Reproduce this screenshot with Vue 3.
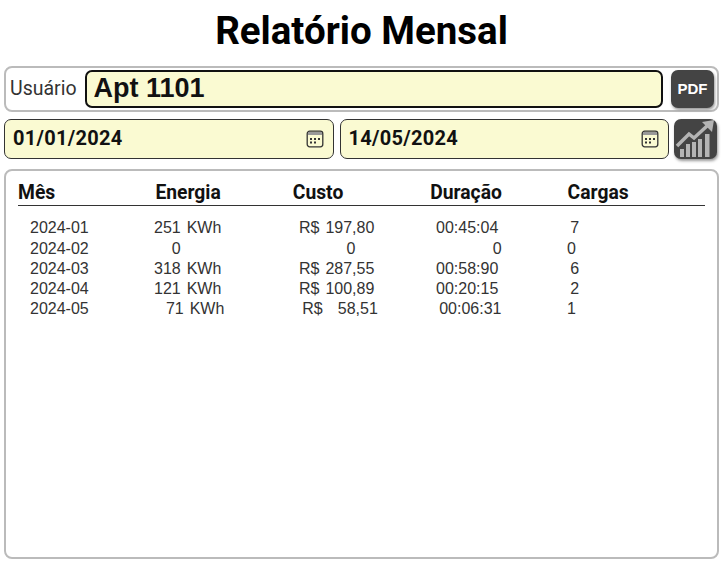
<template>
  <div class="page">
    <h1 class="title">Relatório Mensal</h1>

    <div class="user-box">
      <label class="user-label">Usuário</label>
      <input class="user-input" value="Apt 1101" readonly>
      <button class="btn-pdf">PDF</button>
    </div>

    <div class="date-row">
      <div v-for="d in dates" :key="d" class="date-field">
        <input class="date-input" :value="d" readonly>
        <svg class="cal-icon" viewBox="0 0 18 18" width="18" height="18">
          <rect x="1.2" y="1.2" width="15.6" height="15.6" rx="2.5" fill="none" stroke="#333" stroke-width="1.3" />
          <rect x="2" y="2" width="14" height="3" fill="#999" />
          <rect x="4" y="8" width="2" height="2" fill="#333" />
          <rect x="8" y="8" width="2" height="2" fill="#333" />
          <rect x="12" y="8" width="2" height="2" fill="#333" />
          <rect x="4" y="11.5" width="2" height="2" fill="#333" />
          <rect x="8" y="11.5" width="2" height="2" fill="#333" />
        </svg>
      </div>
      <button class="btn-chart">
        <svg viewBox="0 0 42 40" width="42" height="40">
          <path d="M3 27 L15 15 L20 19 L33 7" fill="none" stroke="#b4b4b4" stroke-width="3.5" />
          <path d="M28 3 L40 1 L38 13 Z" fill="#b4b4b4" />
          <rect x="6" y="30" width="4" height="8" fill="#b4b4b4" />
          <rect x="12" y="25" width="4" height="13" fill="#b4b4b4" />
          <rect x="18" y="23" width="4" height="15" fill="#b4b4b4" />
          <rect x="24" y="20" width="4" height="18" fill="#b4b4b4" />
          <rect x="31" y="15" width="4.5" height="23" fill="#b4b4b4" />
        </svg>
      </button>
    </div>

    <div class="report">
      <div class="report-head">
        <span v-for="h in headers" :key="h">{{ h }}</span>
      </div>
      <div class="report-body">
        <div v-for="r in rows" :key="r[0]" class="report-row">
          <span v-for="(c, i) in r" :key="i">{{ c }}</span>
        </div>
      </div>
    </div>
  </div>
</template>

<script setup>
const dates = ['01/01/2024', '14/05/2024']

const headers = ['Mês', 'Energia', 'Custo', 'Duração', 'Cargas']

const rows = [
  ['2024-01', '251 KWh', 'R$ 197,80', '00:45:04', '\u20097'],
  ['2024-02', '   0', '        0', '         \u20090', '0'],
  ['2024-03', '318 KWh', 'R$ 287,55', '00:58:90', '\u20096'],
  ['2024-04', '121 KWh', 'R$ 100,89', '00:20:15', '\u20092'],
  ['2024-05', '  71 KWh', '\u2009R$  \u200958,51', '\u200900:06:31', '1']
]
</script>

<style>
body {
  background: #fff;
}
</style>

<style scoped>
.page {
  width: 724px;
  height: 561px;
  box-sizing: border-box;
  padding: 0 5px 0 4px;
  overflow: hidden;
  font-family: "Liberation Sans", Arial, sans-serif;
}

.title {
  margin: 0;
  height: 66px;
  line-height: 62px;
  text-align: center;
  font-family: Roboto, sans-serif;
  font-size: 38.5px;
  font-weight: 700;
  color: #000;
}

.user-box {
  display: flex;
  align-items: center;
  gap: 8px;
  height: 46px;
  box-sizing: border-box;
  padding: 0 3px 1px 4px;
  border: 2px solid #bbb;
  border-radius: 8px;
}

.user-label {
  font-family: Roboto, sans-serif;
  font-size: 19.5px;
  color: #333;
}

.user-input {
  flex: 1;
  min-width: 0;
  height: 38px;
  box-sizing: border-box;
  padding: 0 7px;
  border: 2px solid #111;
  border-radius: 7px;
  background: #fafad2;
  font-family: "Liberation Sans", sans-serif;
  font-size: 27px;
  font-weight: 700;
  color: #111;
  outline: none;
}

.btn-pdf {
  width: 43px;
  height: 38px;
  padding: 0;
  border: none;
  border-radius: 7px;
  background: #444;
  box-shadow: 1px 2px 3px #999;
  font-family: "Liberation Sans", sans-serif;
  font-size: 15px;
  font-weight: 700;
  color: #fff;
}

.date-row {
  display: flex;
  align-items: center;
  gap: 6px;
  height: 40px;
  margin-top: 7px;
}

.date-field {
  display: flex;
  align-items: center;
  flex: 1;
  height: 40px;
  box-sizing: border-box;
  padding: 0 9px 2px 8px;
  border: 1.5px solid #333;
  border-radius: 7px;
  background: #fafad2;
}

.date-input {
  flex: 1;
  min-width: 0;
  padding: 0;
  border: none;
  background: transparent;
  font-family: Roboto, sans-serif;
  font-size: 20px;
  font-weight: 700;
  letter-spacing: 0.3px;
  color: #111;
  outline: none;
}

.cal-icon {
  margin-top: 2px;
}

.btn-chart {
  display: flex;
  width: 43px;
  height: 40px;
  margin-left: -1px;
  margin-right: 2px;
  padding: 0;
  border: none;
  border-radius: 7px;
  background: #444;
  box-shadow: 1px 2px 3px #999;
}

.report {
  height: 390px;
  box-sizing: border-box;
  margin-top: 10px;
  padding: 9px 12px 0;
  border: 2px solid #bbb;
  border-radius: 8px;
}

.report-head {
  display: grid;
  grid-template-columns: repeat(5, 1fr);
  height: 25px;
  border-bottom: 1.5px solid #333;
  font-family: Roboto, sans-serif;
  font-size: 19.3px;
  font-weight: 700;
  line-height: 26px;
  color: #111;
}

.report-body {
  margin-top: 12.4px;
  padding-left: 12px;
}

.report-row {
  display: grid;
  grid-template-columns: 124px 145px 137px 131px 1fr;
  height: 20.25px;
  line-height: 20.25px;
  font-size: 16px;
  word-spacing: 1.5px;
  color: #333;
  white-space: pre;
}
</style>
